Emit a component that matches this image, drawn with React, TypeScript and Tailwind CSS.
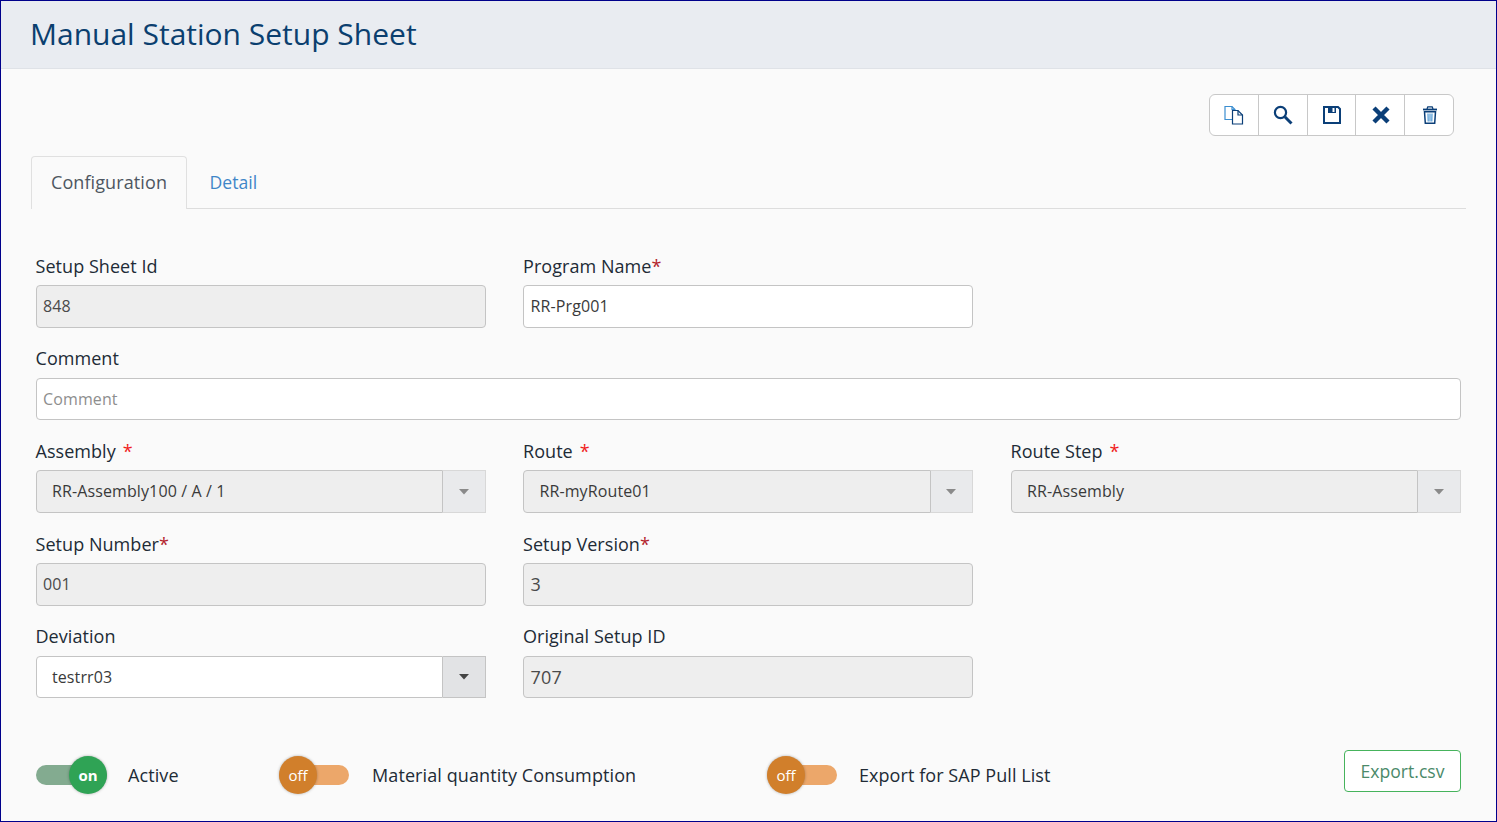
const INPUT_BASE = "h-[42.6px] w-full rounded-[4px] border border-[#c4c4c4] px-[6.6px] flex items-center tracking-[0.1px]";

function Label({ text, star, raised }: { text: string; star?: "tight" | "spaced"; raised?: boolean }) {
  return (
    <div
      className={`flex items-center text-[18px] font-medium leading-[24px] tracking-[0.05px] text-[#212b36] whitespace-pre ${raised ? "h-[22.4px] mb-[8.6px]" : "h-[23.4px] mb-[7.6px]"}`}
    >
      {text}
      {star === "tight" && <span className="text-[#b3242c]">*</span>}
      {star === "spaced" && <span className="ml-[7px] text-[#f01c1c]">*</span>}
    </div>
  );
}

function Input({ value, disabled, placeholder, big }: { value?: string; disabled?: boolean; placeholder?: string; big?: boolean }) {
  return (
    <div
      className={`${INPUT_BASE} ${disabled ? "bg-[#eeeeee] text-[#4a4a4a]" : "bg-white text-[#3a3a3a]"} ${big ? "pt-[0.6px] text-[18px]" : "pb-[0.6px] text-[16px]"}`}
    >
      {placeholder ? <span className="text-[#8e8e8e]">{placeholder}</span> : value}
    </div>
  );
}

function Combo({ value, enabled }: { value: string; enabled?: boolean }) {
  return (
    <div className="flex h-[42.6px] w-full">
      <div
        className={`flex-1 flex items-center pb-[0.6px] pl-[15.4px] text-[16px] tracking-[0.12px] text-[#3a3a3a] border border-[#c4c4c4] rounded-l-[4px] ${enabled ? "bg-white" : "bg-[#eeeeee]"}`}
      >
        {value}
      </div>
      <div
        className={`w-[42.4px] flex items-center justify-center border border-l-0 ${enabled ? "bg-[#e2e3e5] border-[#c4c4c4]" : "bg-[#e9eaec] border-[#d8d8d8]"}`}
      >
        <svg width="10" height="6" viewBox="0 0 10 6">
          <path d="M0 0h10L5 5.5z" fill={enabled ? "#444" : "#8a8a8a"} />
        </svg>
      </div>
    </div>
  );
}

function Field({ children, label, star, raised }: { children: React.ReactNode; label: string; star?: "tight" | "spaced"; raised?: boolean }) {
  return (
    <div className="mb-[19px]">
      <Label text={label} star={star} raised={raised} />
      {children}
    </div>
  );
}

function Toggle({ on, label, gapClass, spacing }: { on?: boolean; label: string; gapClass: string; spacing: string }) {
  return (
    <div className={`flex items-center ${gapClass}`}>
      <div className={`relative h-[20px] ${on ? "w-[71px]" : "w-[70px]"}`}>
        <div className={`absolute inset-0 rounded-full ${on ? "bg-[#83ab90]" : "bg-[#eca76a]"}`} />
        <div
          className={`absolute top-[-9px] flex h-[38px] w-[38px] items-center justify-center rounded-full text-[15px] text-white shadow-[0_0_3px_rgba(0,0,0,0.3)] ${on ? "right-0 bg-[#2fa355] font-bold" : "left-0 bg-[#d17f2b]"}`}
        >
          {on ? "on" : "off"}
        </div>
      </div>
      <span className={`text-[18px] font-medium text-[#212b36] ${spacing}`}>{label}</span>
    </div>
  );
}

const NAVY = "#0b3f78";

function ToolButton({ children, last }: { children: React.ReactNode; last?: boolean }) {
  return (
    <div className={`flex h-full flex-1 items-center justify-center pl-[1px] ${last ? "" : "border-r border-[#c8c8c8]"}`}>
      {children}
    </div>
  );
}

export default function App() {
  return (
    <div className="h-[822px] w-[1497px] overflow-hidden border border-[#00008b] bg-[#fafafa] font-['Open_Sans','Noto_Sans',sans-serif]">
      <div className="flex h-[68px] items-center border-b border-[#dfe2e7] bg-[#e9ecf1] pb-[2px] pl-[29px]">
        <h1 className="text-[30px] font-normal leading-none text-[#0b3f6f]">Manual Station Setup Sheet</h1>
      </div>

      <div className="flex justify-end pr-[42px] pt-[25px]">
        <div className="flex h-[42px] w-[245px] items-center rounded-[6px] border border-[#c8c8c8] bg-white">
          <ToolButton>
            <svg width="20" height="20" viewBox="0 0 20 20" fill="none" strokeWidth="1.2">
              <path d="M1 1.5h7l3 3v10H1z" stroke="#3b8ed0" fill="#fff" />
              <path d="M8 1.5v3h3" stroke="#3b8ed0" />
              <path d="M8.5 5.5h5.5l4.5 4.5v9h-10z" stroke={NAVY} fill="#fff" />
              <path d="M14 5.5V10h4.5" stroke={NAVY} />
            </svg>
          </ToolButton>
          <ToolButton>
            <svg width="20" height="20" viewBox="0 0 20 20" fill="none" stroke={NAVY}>
              <circle cx="7.5" cy="7.5" r="5.6" strokeWidth="2.2" />
              <path d="M11.8 11.8L18.5 18.5" strokeWidth="3" />
            </svg>
          </ToolButton>
          <ToolButton>
            <svg width="20" height="20" viewBox="0 0 20 20" fill="none">
              <path d="M2 2h14L18 4V18H2z" stroke={NAVY} strokeWidth="2" />
              <path d="M6 2h8v6H6z" fill={NAVY} />
              <path d="M10.5 3h2v4h-2z" fill="#fff" />
            </svg>
          </ToolButton>
          <ToolButton>
            <svg width="20" height="20" viewBox="0 0 20 20" fill="none" stroke={NAVY}>
              <path d="M3 3l14 14M17 3L3 17" strokeWidth="4.4" />
            </svg>
          </ToolButton>
          <ToolButton last>
            <svg width="20" height="20" viewBox="0 0 20 20" fill="none" stroke={NAVY}>
              <path d="M3 4.5h14" strokeWidth="1.8" />
              <path d="M7 4l.8-2.2h4.4L13 4" strokeWidth="1.3" />
              <path d="M4.5 6.8l.8 11.4h9.4l.8-11.4z" strokeWidth="1.5" />
              <path d="M8 8.5l.2 8M10 8.5v8M12 8.5l-.2 8" stroke="#3b8ed0" strokeWidth="1.1" />
            </svg>
          </ToolButton>
        </div>
      </div>

      <div className="ml-[30px] mr-[30px] mt-[20px] flex h-[53px] border-b border-[#dddddd]">
        <div className="flex h-[53px] w-[156px] items-center justify-center rounded-t-[4px] border border-b-0 border-[#e0e0e0] bg-[#fafafa] pb-[2px] text-[18px] font-medium tracking-[0.1px] text-[#4d5661]">
          Configuration
        </div>
        <div className="flex h-[52px] items-center pl-[22.5px] text-[17.6px] text-[#3f86c8]">Detail</div>
      </div>

      <div className="mt-[45.25px] grid grid-cols-[450px_450px_450px] gap-x-[37.5px] pl-[34.5px]">
        <Field label="Setup Sheet Id"><Input value="848" disabled /></Field>
        <Field label="Program Name" star="tight"><Input value="RR-Prg001" /></Field>
        <div />
        <div className="col-span-3">
          <Field label="Comment" raised><Input placeholder="Comment" /></Field>
        </div>
        <Field label="Assembly" star="spaced"><Combo value="RR-Assembly100 / A / 1" /></Field>
        <Field label="Route" star="spaced"><Combo value="RR-myRoute01" /></Field>
        <Field label="Route Step" star="spaced"><Combo value="RR-Assembly" /></Field>
        <Field label="Setup Number" star="tight"><Input value="001" disabled /></Field>
        <Field label="Setup Version" star="tight"><Input value="3" disabled big /></Field>
        <div />
        <Field label="Deviation"><Combo value="testrr03" enabled /></Field>
        <Field label="Original Setup ID"><Input value="707" disabled big /></Field>
        <div />
      </div>

      <div className="ml-[35px] mr-[35px] mt-[41.25px] flex items-center">
        <Toggle on label="Active" gapClass="w-[243px] gap-[21px]" spacing="tracking-[0.1px]" />
        <Toggle label="Material quantity Consumption" gapClass="w-[488px] gap-[23px]" spacing="tracking-[0.1px]" />
        <Toggle label="Export for SAP Pull List" gapClass="gap-[22px]" spacing="tracking-[0.06px]" />
        <div className="ml-auto -mt-[8px] flex h-[42px] w-[117px] items-center justify-center rounded-[4px] border border-[#46b35c] bg-white text-[17.6px] text-[#4b8a6a]">
          Export.csv
        </div>
      </div>
    </div>
  );
}
